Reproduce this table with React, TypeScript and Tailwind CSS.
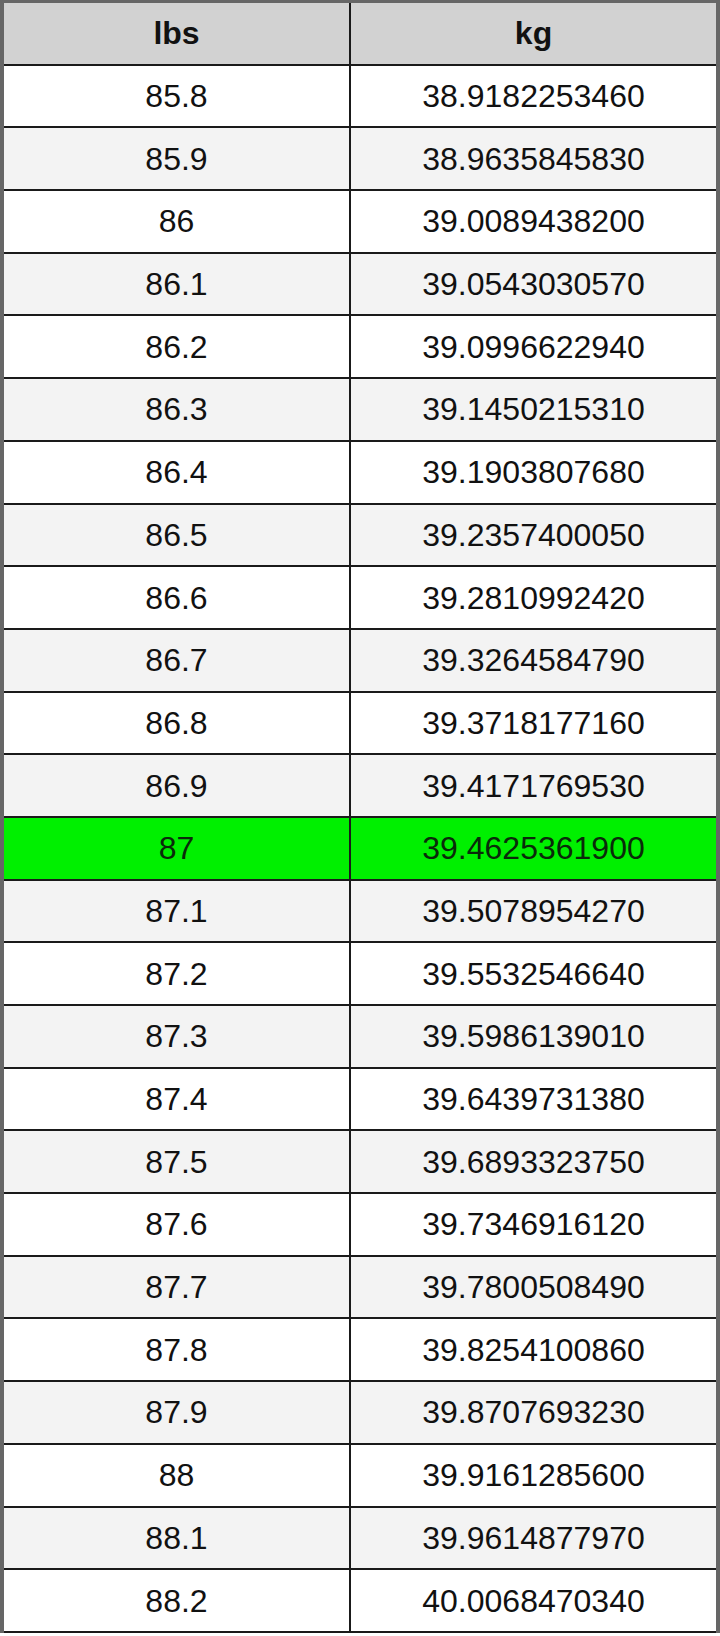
const rows: [string, string][] = [
  ["85.8", "38.9182253460"],
  ["85.9", "38.9635845830"],
  ["86", "39.0089438200"],
  ["86.1", "39.0543030570"],
  ["86.2", "39.0996622940"],
  ["86.3", "39.1450215310"],
  ["86.4", "39.1903807680"],
  ["86.5", "39.2357400050"],
  ["86.6", "39.2810992420"],
  ["86.7", "39.3264584790"],
  ["86.8", "39.3718177160"],
  ["86.9", "39.4171769530"],
  ["87", "39.4625361900"],
  ["87.1", "39.5078954270"],
  ["87.2", "39.5532546640"],
  ["87.3", "39.5986139010"],
  ["87.4", "39.6439731380"],
  ["87.5", "39.6893323750"],
  ["87.6", "39.7346916120"],
  ["87.7", "39.7800508490"],
  ["87.8", "39.8254100860"],
  ["87.9", "39.8707693230"],
  ["88", "39.9161285600"],
  ["88.1", "39.9614877970"],
  ["88.2", "40.0068470340"],
];

export default function App() {
  return (
    <div className="w-[720px] h-[1636px] bg-white font-['Liberation_Sans',Arial,sans-serif] text-[32px] text-[#111]">
      <div className="border-t-[3px] border-x-4 border-[#666]">
        {/* Header */}
        <div className="grid grid-cols-[347px_1fr] h-[62.7px] bg-[#d2d2d2] border-b-2 border-[#1a1a1a] font-bold">
          <div className="flex items-center justify-center border-r-2 border-[#1a1a1a]">lbs</div>
          <div className="flex items-center justify-center">kg</div>
        </div>

        {/* Rows */}
        {rows.map(([lbs, kg], i) => {
          const hl = lbs === "87";
          const bg = hl ? "bg-[#00f000] text-[#0a2a0a]" : i % 2 === 0 ? "bg-white" : "bg-[#f3f3f3]";
          return (
            <div
              key={lbs}
              className={`grid grid-cols-[347px_1fr] h-[62.7px] border-b-2 border-[#1a1a1a] ${bg}`}
            >
              <div className="flex items-center justify-center border-r-2 border-[#1a1a1a]">{lbs}</div>
              <div className="flex items-center justify-center">{kg}</div>
            </div>
          );
        })}
      </div>
    </div>
  );
}
